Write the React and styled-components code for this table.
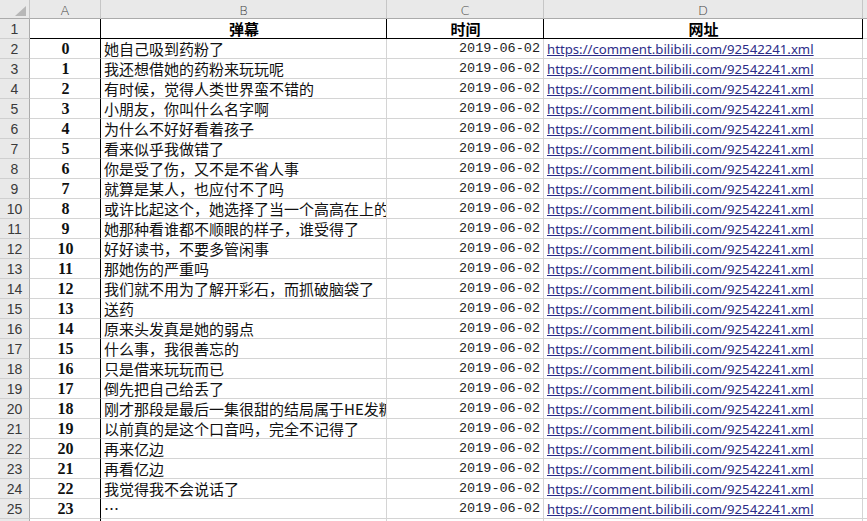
import React from 'react'
import styled, { createGlobalStyle } from 'styled-components'

const Global = createGlobalStyle`
  html, body {
    margin: 0;
    padding: 0;
    background: #fff;
    overflow: hidden;
  }
`

const Sheet = styled.div`
  display: grid;
  grid-template-columns: 30px 71px 286px 157px 319px 1fr;
  grid-template-rows: 19px;
  grid-auto-rows: 20px;
  width: 867px;
  height: 521px;
  overflow: hidden;
  font-family: "Noto Sans CJK SC", "Noto Sans", sans-serif;
`

const Corner = styled.div`
  position: relative;
  background: #e9e9e9;
  border-right: 1px solid #c6c6c6;
  border-bottom: 1px solid #ababab;
  &::after {
    content: "";
    position: absolute;
    right: 3px;
    bottom: 2px;
    border-left: 11px solid transparent;
    border-bottom: 10px solid #b7b7b7;
  }
`

const ColHead = styled.div`
  background: #e9e9e9;
  border-right: 1px solid #c6c6c6;
  border-bottom: 1px solid #ababab;
  display: flex;
  align-items: center;
  justify-content: center;
  font-family: "DejaVu Sans", sans-serif;
  font-size: 13px;
  font-weight: 300;
  color: #444;
  padding-top: 3px;
  box-sizing: border-box;
`

const RowHead = styled.div`
  background: #e9e9e9;
  border-right: 1px solid #ababab;
  border-bottom: 1px solid #cfcfcf;
  display: flex;
  align-items: center;
  justify-content: center;
  font-family: "Liberation Sans", sans-serif;
  font-size: 14px;
  color: #3a3a3a;
  box-sizing: border-box;
  padding-top: 1px;
`

const Cell = styled.div`
  box-sizing: border-box;
  border-right: 1px solid ${p => (p.$edge ? '#000' : '#d4d4d4')};
  border-bottom: 1px solid ${p => (p.$top ? '#000' : '#d4d4d4')};
  display: flex;
  align-items: center;
  justify-content: ${p => p.$align || 'flex-start'};
  padding: 0 ${p => (p.$align === 'flex-end' ? '3px' : '2px')} 0 3px;
  white-space: nowrap;
  overflow: hidden;
  font-size: 15px;
  color: #111;
`

const Title = styled.span`
  font-weight: 700;
  font-size: 15px;
  color: #000;
`

const Index = styled.span`
  font-family: "Liberation Serif", serif;
  font-weight: 700;
  font-size: 16px;
  color: #111;
`

const Date = styled.span`
  font-family: "Liberation Mono", monospace;
  font-size: 13.5px;
  color: #1e1e1e;
`

const Url = styled.a`
  font-family: "Noto Sans", sans-serif;
  font-size: 13.2px;
  color: #2c2c88;
  text-decoration: underline;
`

const texts = [
  '她自己吸到药粉了',
  '我还想借她的药粉来玩玩呢',
  '有时候，觉得人类世界蛮不错的',
  '小朋友，你叫什么名字啊',
  '为什么不好好看着孩子',
  '看来似乎我做错了',
  '你是受了伤，又不是不省人事',
  '就算是某人，也应付不了吗',
  '或许比起这个，她选择了当一个高高在上的存在',
  '她那种看谁都不顺眼的样子，谁受得了',
  '好好读书，不要多管闲事',
  '那她伤的严重吗',
  '我们就不用为了解开彩石，而抓破脑袋了',
  '送药',
  '原来头发真是她的弱点',
  '什么事，我很善忘的',
  '只是借来玩玩而已',
  '倒先把自己给丢了',
  '刚才那段是最后一集很甜的结局属于HE发糖了',
  '以前真的是这个口音吗，完全不记得了',
  '再来亿边',
  '再看亿边',
  '我觉得我不会说话了',
  '…',
  '大剧情',
]

const url = 'https://comment.bilibili.com/92542241.xml'

export default function App() {
  return (
    <>
      <Global />
      <Sheet>
        <Corner />
        {['A', 'B', 'C', 'D', ''].map((c, i) => (
          <ColHead key={i}>{c}</ColHead>
        ))}

        <RowHead>1</RowHead>
        <Cell $top $edge />
        <Cell $top $edge $align="center"><Title>弹幕</Title></Cell>
        <Cell $top $edge $align="center"><Title>时间</Title></Cell>
        <Cell $top $edge $align="center"><Title>网址</Title></Cell>
        <Cell />

        {texts.map((t, i) => (
          <React.Fragment key={i}>
            <RowHead>{i + 2}</RowHead>
            <Cell $edge $align="center"><Index>{i}</Index></Cell>
            <Cell>{t}</Cell>
            <Cell $align="flex-end"><Date>2019-06-02</Date></Cell>
            <Cell><Url href="#">{url}</Url></Cell>
            <Cell />
          </React.Fragment>
        ))}
      </Sheet>
    </>
  )
}
